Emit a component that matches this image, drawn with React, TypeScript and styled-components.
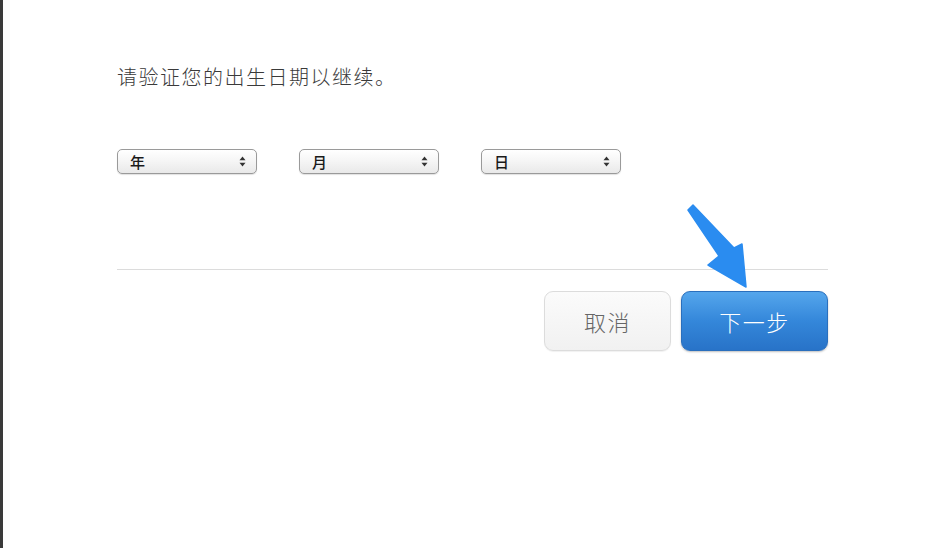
import React from 'react';
import styled, { createGlobalStyle } from 'styled-components';

const GlobalStyle = createGlobalStyle`
  html, body {
    margin: 0;
    padding: 0;
    background: #ffffff;
  }
  body {
    font-family: "Noto Sans CJK SC", "Liberation Sans", sans-serif;
  }
`;

const Page = styled.div`
  position: relative;
  width: 935px;
  height: 548px;
  box-sizing: border-box;
  border-left: 3px solid #3a3a3a;
  background: #ffffff;
  overflow: hidden;
`;

const Content = styled.div`
  width: 711px;
  margin-left: 114px;
  padding-top: 63px;
  display: flex;
  flex-direction: column;
`;

const Prompt = styled.div`
  font-size: 20px;
  font-weight: 300;
  line-height: 28px;
  letter-spacing: 1.5px;
  color: #3a3a3a;
`;

const SelectRow = styled.div`
  display: flex;
  gap: 42px;
  margin-top: 58px;
`;

const SelectBox = styled.div`
  width: 140px;
  height: 25px;
  box-sizing: border-box;
  border: 1px solid #9a9a9a;
  border-radius: 5px;
  background: linear-gradient(#ffffff, #f6f6f6 45%, #e9e9e9);
  box-shadow: 0 1px 1px rgba(0, 0, 0, 0.12);
  display: flex;
  align-items: center;
  justify-content: space-between;
  padding: 0 10px 0 12px;
`;

const SelectLabel = styled.span`
  font-size: 15px;
  font-weight: 500;
  color: #1a1a1a;
`;

const Divider = styled.div`
  height: 1px;
  background: #dcdcdc;
  margin-top: 95px;
`;

const ButtonRow = styled.div`
  display: flex;
  justify-content: flex-end;
  gap: 10px;
  margin-top: 21px;
`;

const ActionButton = styled.button<{ $primary?: boolean }>`
  height: 60px;
  width: ${p => (p.$primary ? '147px' : '127px')};
  box-sizing: border-box;
  border-radius: 9px;
  font-family: "Noto Sans CJK SC", "Liberation Sans", sans-serif;
  font-size: 22px;
  font-weight: 300;
  letter-spacing: 1.5px;
  cursor: pointer;
  border: 1px solid ${p => (p.$primary ? '#2a6fbd' : '#dcdcdc')};
  color: ${p => (p.$primary ? '#ffffff' : '#666666')};
  background: ${p =>
    p.$primary
      ? 'linear-gradient(#55a6ec, #3487da 50%, #2873c8)'
      : 'linear-gradient(#fbfbfb, #f1f1f1)'};
  box-shadow: ${p =>
    p.$primary ? '0 1px 2px rgba(0,0,0,0.25)' : '0 1px 1px rgba(0,0,0,0.06)'};
`;

const Pointer = styled.svg`
  position: absolute;
  left: 0;
  top: 0;
  pointer-events: none;
`;

const Stepper = () => (
  <svg width="7" height="11" viewBox="0 0 7 11">
    <path d="M3.5 0.5 L6.5 4.2 L0.5 4.2 Z" fill="#333" />
    <path d="M3.5 10.5 L6.5 6.8 L0.5 6.8 Z" fill="#333" />
  </svg>
);

export default function App() {
  const fields = ['年', '月', '日'];
  return (
    <>
      <GlobalStyle />
      <Page>
        <Content>
          <Prompt>请验证您的出生日期以继续。</Prompt>
          <SelectRow>
            {fields.map(f => (
              <SelectBox key={f}>
                <SelectLabel>{f}</SelectLabel>
                <Stepper />
              </SelectBox>
            ))}
          </SelectRow>
          <Divider />
          <ButtonRow>
            <ActionButton>取消</ActionButton>
            <ActionButton $primary>下一步</ActionButton>
          </ButtonRow>
        </Content>
        <Pointer width="935" height="548" viewBox="0 0 935 548">
          <path
            d="M685 210 L690 205 L731 248 L739 244 L743 287 L705 265 L716 256 Z"
            fill="#2a8cf0"
            stroke="#2a8cf0"
            strokeLinejoin="round"
            strokeWidth="1.5"
          />
        </Pointer>
      </Page>
    </>
  );
}
